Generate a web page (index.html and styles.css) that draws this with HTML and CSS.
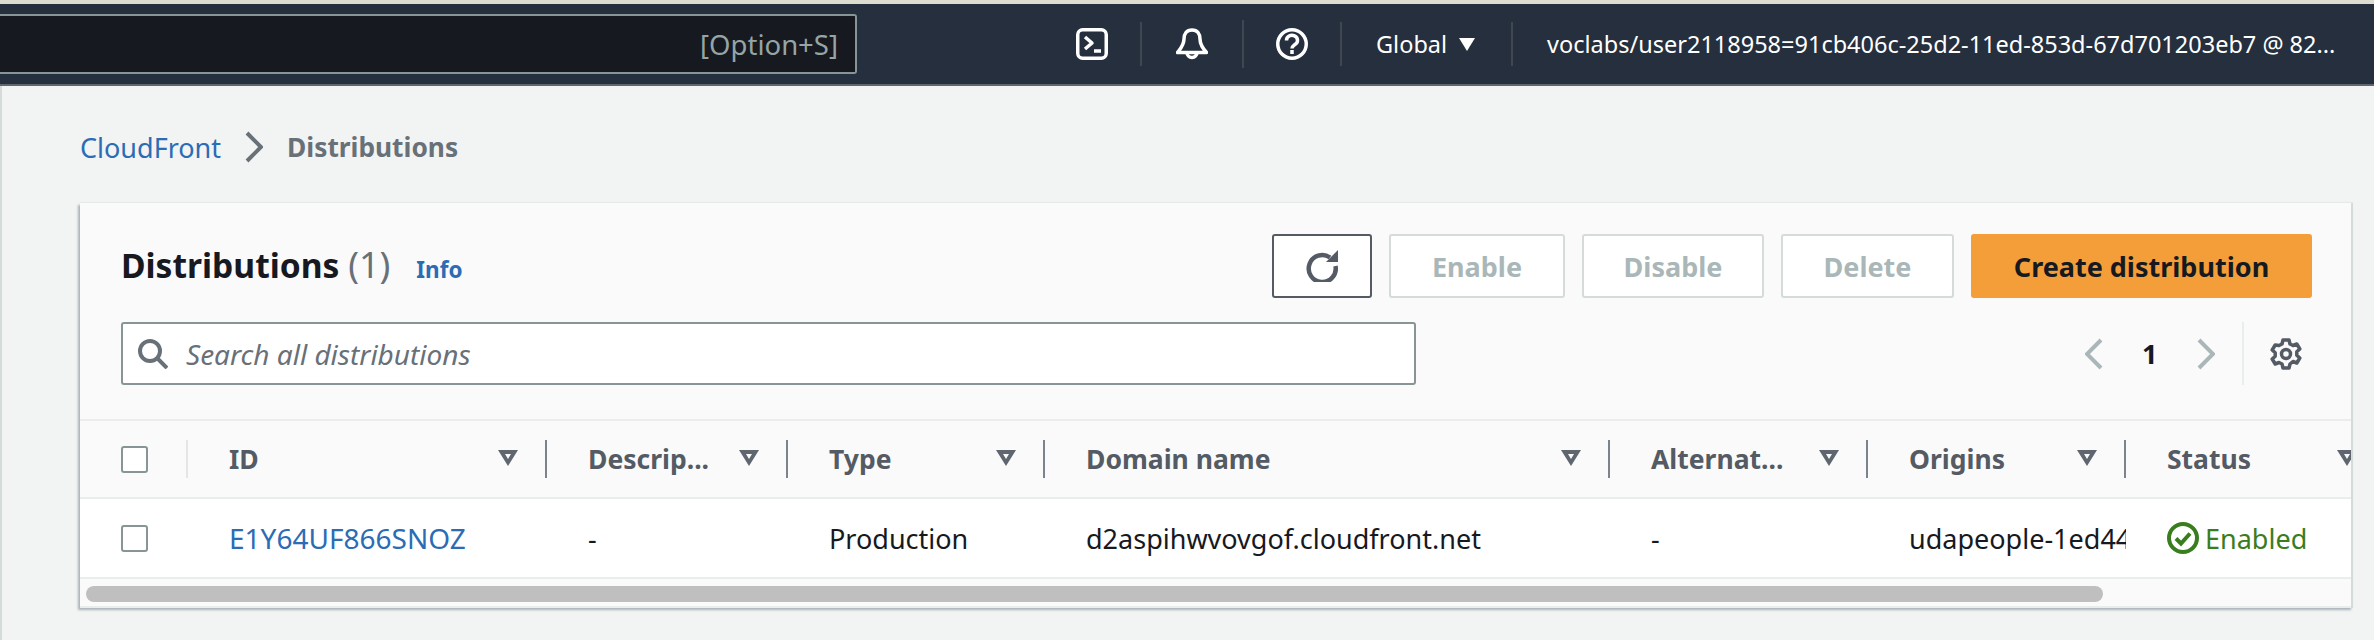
FILE: index.html
```html
<!DOCTYPE html>
<html lang="en">
<head>
<meta charset="utf-8">
<title>Distributions | CloudFront</title>
<link rel="stylesheet" href="styles.css">
</head>
<body>
<header class="nav">
  <div class="nav-search"><span class="nav-hint">[Option+S]</span></div>
  <div class="nav-item nav-terminal">
    <svg class="nav-icon" viewBox="0 0 32 32" fill="none" stroke="#fff" stroke-width="3.500"><rect x="1.750" y="1.750" width="28.500" height="28.500" rx="5"/><path d="M9 9l7 6-7 6" stroke-linejoin="round"/><path d="M18 23h7"/></svg>
  </div>
  <div class="nav-item nav-bell">
    <svg class="nav-icon" viewBox="0 0 32 32" fill="none" stroke="#fff" stroke-width="3.500" stroke-linejoin="round"><path d="M16 2c-5.500 0-8 4-8 9 0 6-3 9-6.500 13.500h29C27 20.500 24 17 24 11c0-5-2.500-9-8-9z"/><path d="M11 24.500a5 5 0 0 0 10 0"/></svg>
  </div>
  <div class="nav-item nav-help">
    <svg class="nav-icon" viewBox="0 0 32 32" fill="none" stroke="#fff" stroke-width="3.500"><circle cx="16" cy="16" r="14.250"/><path d="M10.500 12.500a5.500 5 0 1 1 8.500 4c-2 1.500-3 2-3 4"/><path d="M16 22v4"/></svg>
  </div>
  <div class="nav-item nav-region"><span>Global</span><i class="nav-caret"></i></div>
  <div class="nav-user">voclabs/user2118958=91cb406c-25d2-11ed-853d-67d701203eb7 @ 82...</div>
</header>

<main class="content">
  <nav class="crumbs">
    <a class="crumb-link">CloudFront</a>
    <svg class="crumb-sep" viewBox="0 0 18 32" fill="none" stroke="#687078" stroke-width="4"><path d="M2 2l14 14L2 30"/></svg>
    <span class="crumb-current">Distributions</span>
  </nav>

  <section class="card">
    <div class="card-head">
      <div class="title-row">
        <h1 class="title">Distributions <span class="count">(1)</span></h1>
        <a class="info">Info</a>
        <div class="actions">
          <button class="btn btn-refresh">
            <svg class="refresh-icon" viewBox="0 0 32 32" fill="none"><path d="M24 7.500A13.500 13.500 0 1 0 29.500 16" stroke="#545b64" stroke-width="4.500"/><path d="M32 0v12H20z" fill="#545b64"/></svg>
          </button>
          <button class="btn btn-off btn-enable">Enable</button>
          <button class="btn btn-off btn-disable">Disable</button>
          <button class="btn btn-off btn-delete">Delete</button>
          <button class="btn btn-primary">Create distribution</button>
        </div>
      </div>
      <div class="filter-row">
        <div class="search">
          <svg class="search-icon" viewBox="0 0 30 30" fill="none" stroke="#687078" stroke-width="4"><circle cx="12" cy="12" r="10"/><path d="M19 19l10 10"/></svg>
          <span class="search-text">Search all distributions</span>
        </div>
        <div class="pager">
          <svg class="pager-arrow" viewBox="0 0 18 32" fill="none" stroke="#aab7b8" stroke-width="4"><path d="M16 2L2 16l14 14"/></svg>
          <span class="pager-num">1</span>
          <svg class="pager-arrow" viewBox="0 0 18 32" fill="none" stroke="#aab7b8" stroke-width="4"><path d="M2 2l14 14L2 30"/></svg>
        </div>
        <div class="settings">
          <svg class="gear" viewBox="0 0 32 32" fill="none" stroke="#545b64" stroke-width="3.500" stroke-linejoin="round"><circle cx="16" cy="16" r="4.500"/><path d="M13 2h6l1 4 3 1.500 3.800-1.500 3 5-3 2.700v3.600l3 2.700-3 5-3.800-1.500L20 26l-1 4h-6l-1-4-3-1.500L5.200 26l-3-5 3-2.700v-3.600l-3-2.700 3-5L9 7.500 12 6z"/></svg>
        </div>
      </div>
    </div>

    <div class="table">
      <div class="row row-head">
        <div class="cell cell-check"><span class="check"></span><i class="rule rule-light"></i></div>
        <div class="cell"><span class="th">ID</span><i class="sort"></i><i class="rule"></i></div>
        <div class="cell"><span class="th">Descrip...</span><i class="sort"></i><i class="rule"></i></div>
        <div class="cell"><span class="th">Type</span><i class="sort"></i><i class="rule"></i></div>
        <div class="cell"><span class="th">Domain name</span><i class="sort"></i><i class="rule"></i></div>
        <div class="cell"><span class="th">Alternat...</span><i class="sort"></i><i class="rule"></i></div>
        <div class="cell"><span class="th">Origins</span><i class="sort"></i><i class="rule"></i></div>
        <div class="cell"><span class="th">Status</span><i class="sort"></i></div>
      </div>
      <div class="row row-body">
        <div class="cell cell-check"><span class="check"></span></div>
        <div class="cell"><a class="link">E1Y64UF866SNOZ</a></div>
        <div class="cell">-</div>
        <div class="cell">Production</div>
        <div class="cell">d2aspihwvovgof.cloudfront.net</div>
        <div class="cell">-</div>
        <div class="cell"><span class="clip">udapeople-1ed44</span></div>
        <div class="cell status">
          <svg class="status-icon" viewBox="0 0 32 32" fill="none" stroke="#3a7d1e" stroke-width="4"><circle cx="16" cy="16" r="14"/><path d="M9 16.500l5 5 9-10"/></svg>
          <span>Enabled</span>
        </div>
      </div>
    </div>
    <div class="scroll"><div class="scroll-thumb"></div></div>
  </section>
</main>
</body>
</html>
```

FILE: styles.css
```css
* { box-sizing: border-box; }
html, body { margin: 0; height: 100%; }
body {
  background: #f2f3f3;
  color: #16191f;
  font-family: "Noto Sans", sans-serif;
  font-size: 27px;
  overflow: hidden;
  border-top: 4px solid #dcdccf;
}

/* top bar */
.nav {
  height: 82px;
  background: #252f3e;
  border-bottom: 2px solid #5f6670;
  display: flex;
  align-items: center;
  color: #fff;
}
.nav-search {
  width: 857px;
  height: 60px;
  background: #16191f;
  border: 2px solid #879596;
  border-left: 0;
  border-radius: 0 3px 3px 0;
  display: flex;
  align-items: center;
  justify-content: flex-end;
  padding-right: 17px;
  color: #95a5a6;
  font-size: 27.500px;
}
.nav-item {
  height: 44px;
  display: flex;
  align-items: center;
  border-right: 2px solid #414750;
}
.nav-terminal { padding: 0 32px 0 219px; }
.nav-bell { height: 48px; padding: 0 34px; }
.nav-help { padding: 0 32px; }
.nav-icon { width: 32px; height: 32px; display: block; }
.nav-region { padding: 0 36px 0 34px; font-size: 23.500px; gap: 12px; }
.nav-caret {
  width: 0;
  height: 0;
  border-left: 8px solid transparent;
  border-right: 8px solid transparent;
  border-top: 13px solid #fff;
}
.nav-user { margin-left: 34px; font-size: 23.500px; white-space: nowrap; }

/* page */
.content {
  height: 554px;
  border-left: 2px solid #d5dbdb;
  padding: 0 21px 0 78px;
}
.crumbs {
  height: 117px;
  padding-top: 5px;
  display: flex;
  align-items: center;
  gap: 24px;
}
.crumb-link { color: #2b6cb5; }
.crumb-sep { width: 18px; height: 32px; }
.crumb-current { color: #687078; font-weight: 700; font-size: 26.300px; }

/* card */
.card {
  width: 2273px;
  background: #fafafa;
  border-right: 2px solid #d5dbdb;
  box-shadow: -2px 2px 2px #aab4bb, 0 -1px 1px #e6e9e9;
}
.card-head { padding: 31px 39px 34px 41px; }
.title-row { display: flex; align-items: center; height: 64px; }
.title { margin: -2px 0 0; font-size: 33.600px; font-weight: 700; line-height: 1; }
.count { font-weight: 400; color: #687078; font-size: 36px; }
.info { color: #2b6cb5; font-weight: 700; font-size: 22.500px; margin: 6px 0 0 26px; }
.actions { margin-left: auto; display: flex; gap: 17px; }
.btn {
  height: 64px;
  border-radius: 3px;
  border: 2px solid #d5dbdb;
  background: #fff;
  font: 700 27px "Noto Sans", sans-serif;
  padding: 0;
}
.btn-refresh { width: 100px; border-color: #545b64; display: flex; align-items: center; justify-content: center; }
.refresh-icon { width: 32px; height: 32px; }
.btn-off { color: #aab7b8; }
.btn-enable { width: 176px; }
.btn-disable { width: 182px; }
.btn-delete { width: 173px; }
.btn-primary { width: 341px; background: #f39e38; border-color: #f39e38; color: #16191f; }

.filter-row { display: flex; align-items: center; margin-top: 24px; height: 63px; }
.search {
  width: 1295px;
  height: 63px;
  background: #fff;
  border: 2px solid #879596;
  border-radius: 3px;
  display: flex;
  align-items: center;
  padding-left: 15px;
  gap: 18px;
}
.search-icon { width: 30px; height: 30px; }
.search-text { font-style: italic; color: #687078; font-size: 28px; }
.pager { margin-left: auto; display: flex; align-items: center; gap: 39px; padding-right: 27px; }
.pager-arrow { width: 18px; height: 32px; }
.pager-num { font-weight: 700; width: 16px; }
.settings { height: 63px; border-left: 2px solid #eaeded; padding: 0 10px 0 26px; display: flex; align-items: center; }
.gear { width: 32px; height: 32px; }

/* table */
.table { overflow: hidden; }
.row {
  display: grid;
  grid-template-columns: 108px 359px 241px 257px 565px 258px 258px 260px;
  border-top: 2px solid #eaeded;
}
.row-head { height: 78px; color: #545b64; font-size: 26.500px; }
.row-body { height: 82px; background: #fff; border-bottom: 2px solid #eaeded; }
.cell {
  position: relative;
  display: flex;
  align-items: center;
  padding: 0 0 0 41px;
  overflow: hidden;
  white-space: nowrap;
}
.th { font-weight: 700; }
.sort {
  position: absolute;
  right: 29px;
  top: 29px;
  width: 0;
  height: 0;
  border-left: 10px solid transparent;
  border-right: 10px solid transparent;
  border-top: 16px solid #5f6670;
}
.sort::after {
  content: "";
  position: absolute;
  left: -3px;
  top: -12px;
  width: 0;
  height: 0;
  border-left: 3px solid transparent;
  border-right: 3px solid transparent;
  border-top: 5px solid #fafafa;
}
.rule { position: absolute; right: 0; top: 19px; width: 2px; height: 38px; background: #7b838c; }
.rule-light { background: #e3e6e6; }
.check {
  width: 27px;
  height: 27px;
  background: #fff;
  border: 2px solid #879596;
  border-radius: 3px;
}
.link { color: #2b6cb5; font-size: 28px; }
.clip { display: block; width: 217px; overflow: hidden; }
.status { color: #3a7d1e; gap: 6px; }
.status-icon { width: 32px; height: 32px; }

.scroll { height: 29px; padding: 7px 0 0 6px; border-bottom: 2px solid #eaeded; }
.scroll-thumb { width: 2017px; height: 16px; border-radius: 8px; background: #bfbfbf; }
```
